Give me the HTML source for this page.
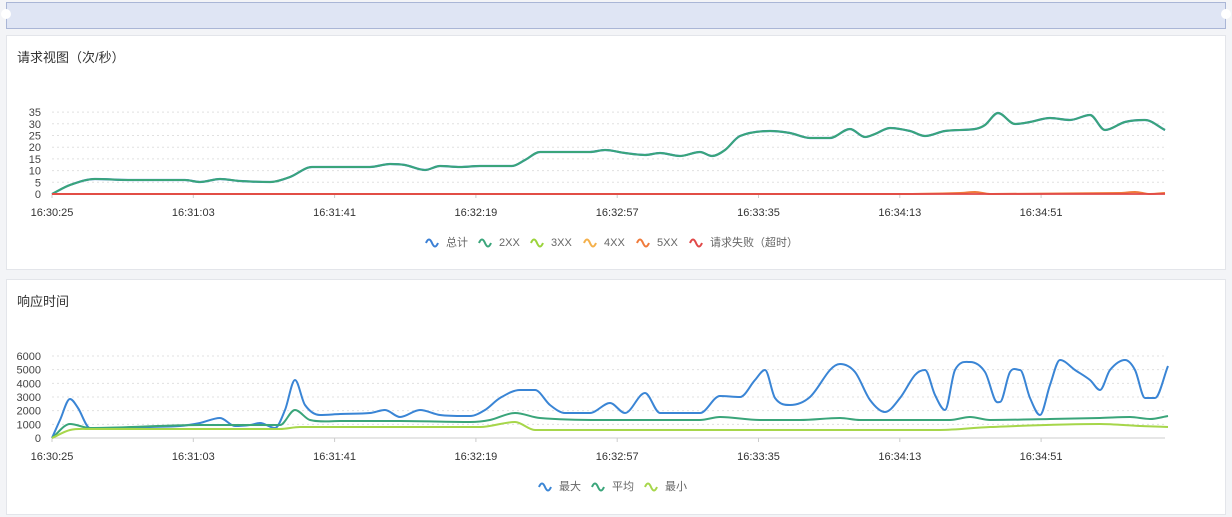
<!DOCTYPE html>
<html><head><meta charset="utf-8"><style>
body{margin:0;width:1232px;height:517px;background:#f3f4f7;font-family:"Liberation Sans","Noto Sans CJK SC",sans-serif;position:relative;overflow:hidden}
.top{position:absolute;left:6px;top:2px;width:1218px;height:25px;background:#dfe5f4;border:1px solid #aab6d6}
.dot{position:absolute;top:9px;width:10px;height:10px;border-radius:50%;background:#fff}
.panel{position:absolute;left:6px;width:1218px;background:#fff;border:1px solid #e3e5ea}
.title{position:absolute;left:10px;top:11px;font-size:13px;color:#333}
svg{position:absolute;left:0;top:0}
</style></head><body>
<div class="top"></div><div class="dot" style="left:1px"></div><div class="dot" style="left:1221px"></div>
<div class="panel" style="top:35px;height:233px"><div class="title">请求视图（次/秒）</div></div>
<div class="panel" style="top:279px;height:234px"><div class="title">响应时间</div></div>
<svg width="1232" height="517" id="s" font-family="Liberation Sans, Noto Sans CJK SC, sans-serif" font-size="11" fill="#333">
<g id="g"></g>
</svg>
<script>
var g=document.getElementById('g'),h='';
function grid(y0,step,n,labels){for(var i=0;i<=n;i++){var y=y0-i*step;
 if(i>0)h+='<line x1="52" x2="1165" y1="'+y+'" y2="'+y+'" stroke="#e0e0e0" stroke-dasharray="2,3"/>';
 h+='<text x="41" y="'+(y+4)+'" text-anchor="end" fill="#444">'+labels[i]+'</text>';}
 h+='<line x1="52" x2="1165" y1="'+y0+'" y2="'+y0+'" stroke="#ccc"/>';
 var t=['16:30:25','16:31:03','16:31:41','16:32:19','16:32:57','16:33:35','16:34:13','16:34:51'];
 for(var k=0;k<8;k++){var x=52+k*141.3;h+='<line x1="'+x+'" x2="'+x+'" y1="'+y0+'" y2="'+(y0+4)+'" stroke="#ccc"/>';
 h+='<text x="'+x+'" y="'+(y0+22)+'" text-anchor="middle" fill="#333">'+t[k]+'</text>';}}
function slope(p,i){var a=p[i-1]||p[i],c=p[i+1]||p[i];var m=(c[1]-a[1])/(c[0]-a[0]||1);
 if(p[i-1]&&p[i+1]){var s1=p[i][1]-a[1],s2=c[1]-p[i][1];if(s1*s2<=0)m=0;}return m;}
function sm(p,c,w){var d='M'+p[0][0]+','+p[0][1];for(var i=0;i<p.length-1;i++){var b=p[i],e=p[i+1],dx=(e[0]-b[0])/3;
 var m1=slope(p,i),m2=slope(p,i+1);
 d+=' C'+(b[0]+dx)+','+(b[1]+m1*dx)+' '+(e[0]-dx)+','+(e[1]-m2*dx)+' '+e[0]+','+e[1];}
 h+='<path d="'+d+'" fill="none" stroke="'+c+'" stroke-width="'+(w||2)+'" stroke-linejoin="round"/>';}
function P(s){return s.trim().split(/\s+/).map(function(q){return q.split(',').map(Number)});}
grid(194,11.7,7,['0','5','10','15','20','25','30','35']);
grid(438,13.67,6,['0','1000','2000','3000','4000','5000','6000']);
var tot=P('52,194 70,185 95,179 130,180 160,180 185,180 200,182 220,179 240,181 270,182 290,177 312,167 330,167 370,167 390,164 405,165 425,170 440,166 460,167 480,166 500,166 512,166 525,160 540,152 560,152 590,152 605,150 625,153 645,155 660,153 680,156 700,152 712,156 725,150 740,136 770,131 790,133 810,138 830,138 850,129 865,137 875,134 890,128 910,131 925,136 945,131 975,129 985,125 998,113 1015,124 1030,122 1050,118 1070,120 1090,115 1105,130 1125,122 1145,120 1165,130');
sm(tot,'#3a7fd5',2.2);sm(tot,'#3aa57a',2);
sm(P('52,194 900,194 960,193 975,192 990,194 1120,193 1135,192 1150,194 1165,193'),'#f07a3a',2);
sm(P('52,194 1165,194'),'#e04848',1.8);
sm(P('52,438 60,420 70,399 78,408 90,428 110,428 150,427 180,426 200,423 220,418 235,426 250,425 260,423 275,428 285,410 295,380 305,405 320,415 340,414 370,413 385,410 400,417 420,410 440,415 470,416 485,410 500,398 520,390 535,390 550,405 565,413 590,413 610,403 625,413 645,393 660,413 680,413 700,413 720,396 740,397 755,380 765,370 775,398 790,405 810,397 830,370 840,364 855,372 870,400 885,412 900,398 915,375 925,370 935,395 945,410 955,370 970,362 985,372 995,400 1000,402 1010,372 1020,370 1030,398 1040,415 1050,385 1060,360 1075,370 1090,380 1100,390 1110,370 1125,360 1135,370 1145,398 1155,398 1168,366'),'#3a85d5',2);
sm(P('52,438 70,424 90,428 200,425 280,425 295,410 310,420 340,421 400,421 470,422 490,420 515,413 540,418 600,420 700,420 720,417 760,420 800,420 840,418 860,420 950,420 970,417 990,420 1050,419 1100,418 1130,417 1150,419 1168,416'),'#3aa57a',2);
sm(P('52,438 70,430 90,429 280,429 300,427 480,427 515,422 535,430 700,430 740,430 940,430 990,427 1100,424 1140,426 1168,427'),'#a6d64a',2);
function leg(x,y,c,t){h+='<path d="M'+x+','+(y+1)+' q3,-7 6,0 t6,0" fill="none" stroke="'+c+'" stroke-width="2"/><text x="'+(x+20)+'" y="'+(y+4)+'" fill="#666">'+t+'</text>';}
leg(426,242,'#3a7fd5','总计');leg(479,242,'#3aa57a','2XX');leg(531,242,'#9ad33a','3XX');leg(584,242,'#f4b04a','4XX');leg(637,242,'#f07a3a','5XX');leg(690,242,'#e04848','请求失败（超时）');
leg(539,486,'#3a85d5','最大');leg(592,486,'#3aa57a','平均');leg(645,486,'#a6d64a','最小');
g.innerHTML=h;
</script>
</body></html>
